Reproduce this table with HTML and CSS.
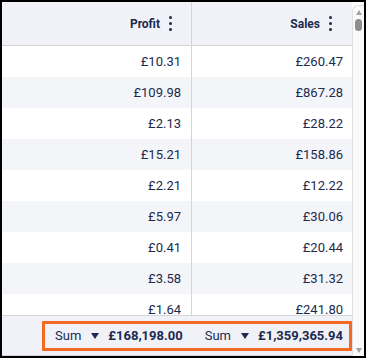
FILE: index.html
```html
<html lang="en">
<head>
    <meta charset="UTF-8">
    <meta name="viewport" content="width=device-width, initial-scale=1.0">
    <title>Grid</title>
    <link rel="stylesheet" href="styles.css">
</head>
<body>
    <div class="frame">
        <div class="grid">
            <div class="header">
                <div class="cell col-profit">Profit <span class="menu"><i></i><i></i><i></i></span></div>
                <div class="cell col-sales">Sales <span class="menu"><i></i><i></i><i></i></span></div>
            </div>
            <div class="body">
                <div class="row"><div class="cell col-profit">£10.31</div><div class="cell col-sales">£260.47</div></div>
                <div class="row alt"><div class="cell col-profit">£109.98</div><div class="cell col-sales">£867.28</div></div>
                <div class="row"><div class="cell col-profit">£2.13</div><div class="cell col-sales">£28.22</div></div>
                <div class="row alt"><div class="cell col-profit">£15.21</div><div class="cell col-sales">£158.86</div></div>
                <div class="row"><div class="cell col-profit">£2.21</div><div class="cell col-sales">£12.22</div></div>
                <div class="row alt"><div class="cell col-profit">£5.97</div><div class="cell col-sales">£30.06</div></div>
                <div class="row"><div class="cell col-profit">£0.41</div><div class="cell col-sales">£20.44</div></div>
                <div class="row alt"><div class="cell col-profit">£3.58</div><div class="cell col-sales">£31.32</div></div>
                <div class="row"><div class="cell col-profit">£1.64</div><div class="cell col-sales">£241.80</div></div>
            </div>
            <div class="footer">
                <div class="totals">
                    <div class="total col-profit"><span class="agg">Sum</span><span class="caret"></span><b>£168,198.00</b></div>
                    <div class="total col-sales"><span class="agg">Sum</span><span class="caret"></span><b>£1,359,365.94</b></div>
                </div>
            </div>
        </div>
        <div class="scrollbar">
            <span class="arrow up"></span>
            <span class="thumb"></span>
            <span class="spacer"></span>
            <span class="arrow down"></span>
        </div>
    </div>
</body>
</html>
```

FILE: styles.css
```css
* {
    box-sizing: border-box;
}

body {
    margin: 0;
    font-family: Roboto, "Liberation Sans", sans-serif;
    color: #1b2a4e;
}

.frame {
    width: 366px;
    height: 358px;
    border: 2px solid #000;
    display: flex;
    background-color: #fff;
}

.grid {
    flex: 1;
    display: flex;
    flex-direction: column;
    overflow: hidden;
}

.header {
    display: flex;
    height: 44px;
    flex: none;
    background-color: #f1f2f7;
    border-bottom: 1px solid #d3d5db;
    font-size: 12px;
    font-weight: bold;
}

.header .cell {
    gap: 9px;
}

.header .col-profit {
    padding-right: 19px;
}

.header .col-sales {
    padding-right: 20px;
}

.cell {
    display: flex;
    align-items: center;
    justify-content: flex-end;
    height: 100%;
}

.col-profit {
    width: 190px;
    border-right: 1px solid #d3d5db;
    padding-right: 10px;
}

.col-sales {
    flex: 1;
    padding-right: 9px;
}

.menu {
    display: flex;
    flex-direction: column;
    gap: 3px;
}

.menu i {
    width: 3px;
    height: 3px;
    border-radius: 50%;
    background-color: #1b2a4e;
}

.body {
    flex: 1;
    overflow: hidden;
    font-size: 13px;
}

.row {
    display: flex;
    height: 31px;
}

.row.alt {
    background-color: #f4f5f9;
}

.footer {
    flex: none;
    height: 41px;
    background-color: #f1f2f7;
    border-top: 1px solid #d3d5db;
    border-bottom: 1px solid #d3d5db;
    display: flex;
    justify-content: flex-end;
    align-items: center;
}

.totals {
    display: flex;
    gap: 22px;
    height: 30px;
    align-items: center;
    border: 3px solid #f26a23;
    padding: 0 6px 0 10px;
    font-size: 13px;
}

.total {
    display: flex;
    align-items: center;
    width: auto;
    border: none;
    padding: 0;
}

.agg {
    margin-right: 10px;
}

.caret {
    width: 0;
    height: 0;
    border-left: 4px solid transparent;
    border-right: 4px solid transparent;
    border-top: 6px solid #1b2a4e;
    margin-right: 9px;
}

.total b {
    font-weight: bold;
}

.scrollbar {
    width: 12px;
    flex: none;
    display: flex;
    flex-direction: column;
    align-items: center;
    background-color: #fafafa;
    border-left: 1px solid #e0e0e0;
    border-top: 1px solid #e0e0e0;
    border-top-left-radius: 6px;
    margin-top: 3px;
    padding: 4px 0 3px;
}

.arrow {
    width: 0;
    height: 0;
    border-left: 3px solid transparent;
    border-right: 3px solid transparent;
}

.arrow.up {
    border-bottom: 5px solid #a3a3a3;
}

.arrow.down {
    border-top: 5px solid #a3a3a3;
}

.thumb {
    width: 7px;
    height: 12px;
    border-radius: 4px;
    background-color: #8e8e8e;
    margin-top: 4px;
}

.spacer {
    flex: 1;
}
```
